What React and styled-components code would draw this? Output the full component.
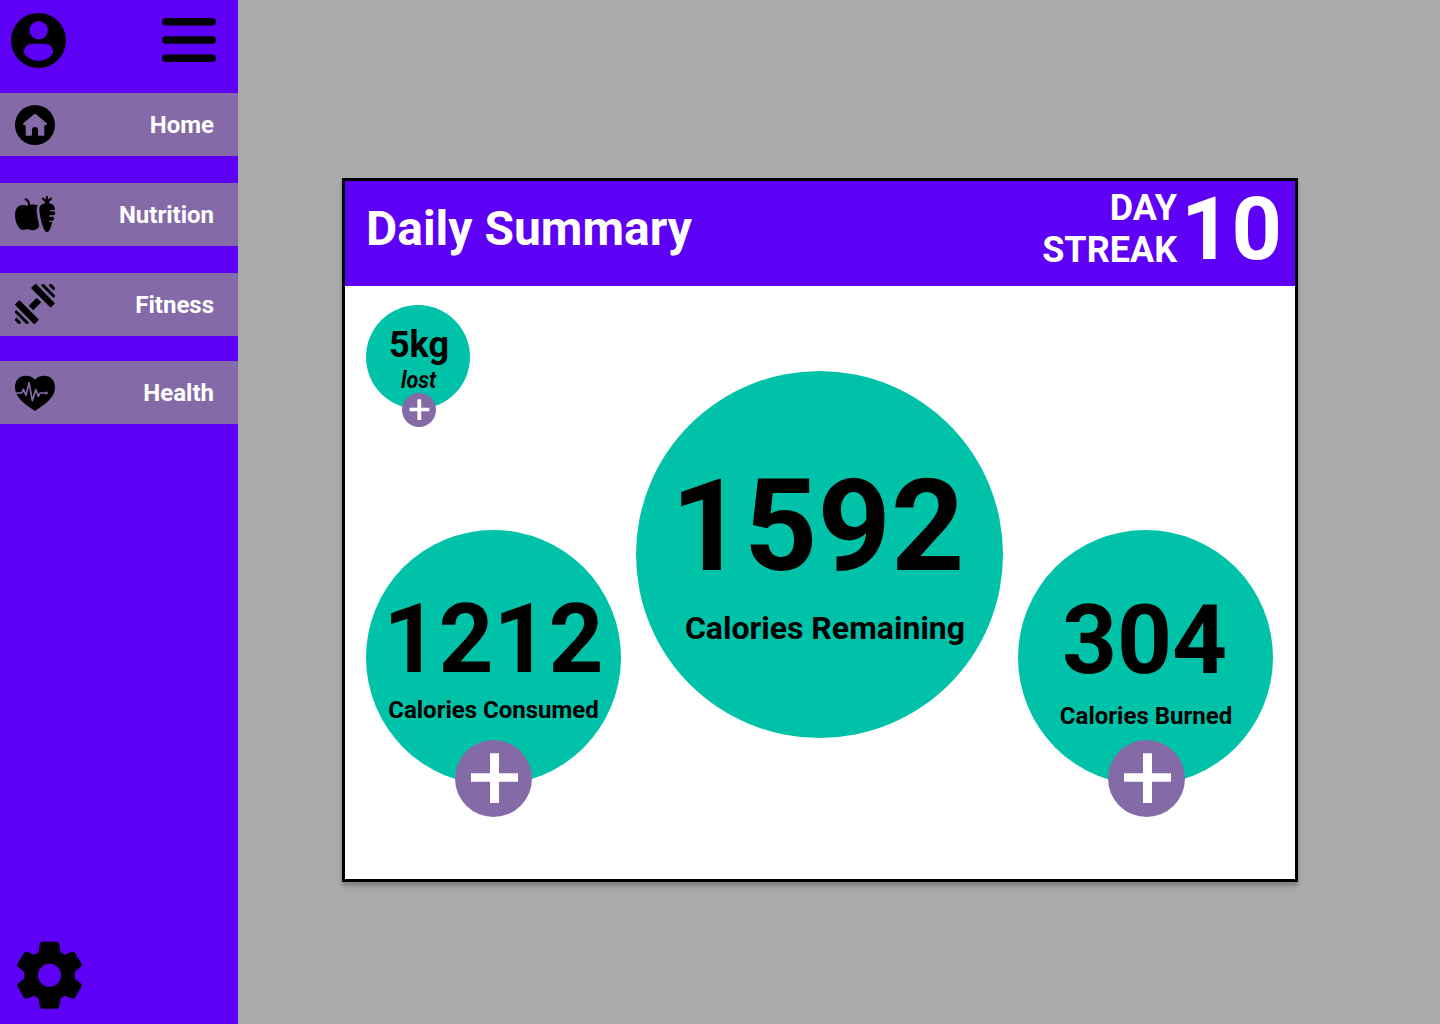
import React from "react";
import styled, { createGlobalStyle } from "styled-components";

const colors = {
  purple: "#5e00f5",
  mauve: "#846ba8",
  teal: "#00c2a9",
  grey: "#aaaaaa",
};

const GlobalStyle = createGlobalStyle`
  *, *::before, *::after { box-sizing: border-box; }
  body { margin: 0; font-family: Roboto, "Liberation Sans", sans-serif; font-weight: 700; }
`;

const Page = styled.div`
  display: flex;
  width: 1440px;
  height: 1024px;
  overflow: hidden;
  background: ${colors.grey};
`;

const Sidebar = styled.aside`
  display: flex;
  flex-direction: column;
  width: 238px;
  flex: none;
  background: ${colors.purple};
`;

const SidebarTop = styled.div`
  display: flex;
  justify-content: space-between;
  align-items: flex-start;
  height: 93px;
  padding: 13px 22px 0 11px;
`;

const IconButton = styled.button`
  display: block;
  padding: 0;
  border: 0;
  background: none;
  color: #000;
  cursor: pointer;
  svg { display: block; }
`;

const MenuButton = styled(IconButton)`
  margin-top: 5px;
`;

const Nav = styled.nav`
  display: flex;
  flex-direction: column;
`;

const NavItem = styled.a`
  display: flex;
  justify-content: space-between;
  align-items: flex-start;
  height: 63px;
  margin-bottom: ${(p) => p.$gap}px;
  padding: 0 24px 0 15px;
  background: ${colors.mauve};
  color: #fff;
  font-size: 24px;
  line-height: 65px;
`;

const NavIcon = styled.span`
  display: block;
  margin-top: ${(p) => p.$top}px;
  color: #000;
  svg { display: block; }
`;

const SidebarFooter = styled.div`
  margin-top: auto;
  padding: 0 0 15px 17px;
`;

const Main = styled.main`
  flex: 1;
  display: flex;
  justify-content: center;
  align-items: flex-start;
  padding: 178px 38px 0 0;
`;

const Card = styled.section`
  width: 956px;
  height: 704px;
  border: 3px solid #000;
  background: #fff;
  box-shadow: 0 4px 4px rgba(0, 0, 0, 0.25);
`;

const CardHeader = styled.header`
  display: flex;
  justify-content: space-between;
  align-items: flex-start;
  height: 105px;
  padding: 0 13px 0 21px;
  background: ${colors.purple};
  color: #fff;
`;

const Title = styled.h1`
  margin: 20px 0 0;
  font-size: 48px;
  line-height: 56px;
`;

const Streak = styled.div`
  display: flex;
  align-items: flex-start;
  gap: 4px;
`;

const StreakLabel = styled.div`
  margin-top: 6px;
  font-size: 36px;
  line-height: 42px;
  text-align: right;
`;

const StreakCount = styled.div`
  margin-top: -4px;
  font-size: 88px;
  line-height: 103px;
`;

const CardBody = styled.div`
  display: grid;
  grid-template-columns: 255px 367px 255px;
  column-gap: 15px;
  padding: 19px 22px 0 21px;
`;

const Column = styled.div`
  display: flex;
  flex-direction: column;
  padding-top: ${(p) => p.$top}px;
`;

const Bubble = styled.div`
  position: relative;
  display: flex;
  flex-direction: column;
  align-items: center;
  width: ${(p) => p.$size}px;
  height: ${(p) => p.$size}px;
  padding-top: ${(p) => p.$pad}px;
  margin-top: ${(p) => p.$gap || 0}px;
  border-radius: 50%;
  background: ${colors.teal};
  color: #000;
  white-space: nowrap;
`;

const Value = styled.div`
  font-size: ${(p) => p.$size}px;
  line-height: ${(p) => p.$line}px;
  margin-left: ${(p) => p.$nudge || 0}px;
`;

const Label = styled.div`
  margin-top: ${(p) => p.$gap}px;
  margin-left: ${(p) => p.$nudge || 0}px;
  font-size: ${(p) => p.$size || 24}px;
  line-height: ${(p) => (p.$size === 32 ? 38 : 28)}px;
`;

const Caption = styled.div`
  margin-left: 2px;
  font-size: 24px;
  font-style: italic;
  line-height: 28px;
  transform: scaleX(0.9);
`;

const AddButton = styled.button`
  position: absolute;
  left: ${(p) => p.$left}px;
  top: ${(p) => p.$top}px;
  width: ${(p) => p.$size}px;
  height: ${(p) => p.$size}px;
  padding: 0;
  border: 0;
  border-radius: 50%;
  background: ${colors.mauve};
  color: #fff;
  cursor: pointer;
  svg { display: block; }
`;

const PlusIcon = () => (
  <svg width="77" height="77" viewBox="0 0 77 77" fill="currentColor" aria-hidden="true">
    <path d="M35 13.300H44V33.200H63V41.700H44V63.100H35V41.700H16V33.200H35Z" />
  </svg>
);

const SmallPlusIcon = () => (
  <svg width="34" height="34" viewBox="0 0 34 34" fill="currentColor" aria-hidden="true">
    <path d="M15.400 6.300H19.200V14.700H27.300V18.200H19.200V27H15.400V18.200H7.600V14.700H15.400Z" />
  </svg>
);

const ProfileIcon = () => (
  <svg width="55" height="55" viewBox="0 0 165 165" aria-hidden="true">
    <path
      fillRule="evenodd"
      d="M82.500 0a82.500 82.500 0 1 0 0 165a82.500 82.500 0 1 0 0-165ZM83 24a27.500 27.500 0 1 1 0 55a27.500 27.500 0 1 1 0-55ZM65 92H100C117 92 126 103 126 119C117 135 100 143 83 143C65 143 48 135 39 119C39 103 48 92 65 92Z"
    />
  </svg>
);

const MenuIcon = () => (
  <svg width="54" height="44" viewBox="0 0 54 44" aria-hidden="true">
    <path d="M3.800 3.800H50.200M3.800 22H50.200M3.800 40.200H50.200" stroke="currentColor" strokeWidth="7.600" strokeLinecap="round" />
  </svg>
);

const HomeIcon = () => (
  <svg width="40" height="40" viewBox="0 0 120 120" aria-hidden="true">
    <circle cx="60" cy="60" r="60" />
    <path
      fill={colors.mauve}
      d="M55 29Q60 25 65 29L95 55Q98 60 92 61H88V89Q88 92 85 92H72Q69 92 69 89V75Q69 66 60 66Q51 66 51 75V89Q51 92 48 92H35Q32 92 32 89V61H28Q22 60 25 55Z"
    />
  </svg>
);

const NutritionIcon = () => (
  <svg width="40" height="40" viewBox="0 0 120 120" aria-hidden="true">
    <path d="M32 13C39 14 42 20 42 33" fill="none" stroke="currentColor" strokeWidth="6.500" strokeLinecap="round" />
    <path d="M39 33C44 29 56 27 68 31C65 38 64 46 66 56C68 70 71 82 73 94C68 102 61 106 54 106C47 106 43 103 38 103C33 103 29 106 22 105C9 102 0 79 0 60C0 41 10 30 22 30C29 30 34 31 39 33Z" />
    <path d="M96 28V6M94 25C93 18 90 14 84 11M98 25C99 18 102 14 108 11" fill="none" stroke="currentColor" strokeWidth="6.500" strokeLinecap="round" />
    <path d="M84 26C89 24 103 24 108 26C116 28 121 36 119 47C118 59 111 88 105 103C103 109 100 111 96 111C92 111 89 108 87 103C80 87 74 61 73 46C72 35 76 28 84 26Z" />
    <path d="M107 47H120M104 63H120M104 79H120" stroke={colors.mauve} strokeWidth="3.800" strokeLinecap="round" />
    <path d="M107 55H117M104 71H113" stroke="currentColor" strokeWidth="9" strokeLinecap="round" />
  </svg>
);

const FitnessIcon = () => (
  <svg width="40" height="40" viewBox="0 0 120 120" aria-hidden="true">
    <g stroke="currentColor" strokeWidth="6" strokeLinejoin="round">
      <path d="M52 12L62 3L116 58L107 67Z" />
      <path d="M3 62L13 52L68 107L58 117Z" />
      <path d="M65 44L76 55L55 76L44 65Z" strokeWidth="4" />
    </g>
    <g stroke="currentColor" strokeWidth="9" strokeLinecap="butt">
      <path d="M81 1L119 39M104 1L119 16M1 81L39 119M1 104L16 119" />
    </g>
  </svg>
);

const HealthIcon = () => (
  <svg width="40" height="40" viewBox="0 0 120 120" aria-hidden="true">
    <path d="M60 20C66 12 76 8 87 8C107 8 120 22 120 42C120 68 104 85 60 114C16 85 0 68 0 42C0 22 13 8 33 8C44 8 54 12 60 20Z" />
    <path d="M0 60H20L25 49L33 67L42 29L52 83L62 50L70 70L75 60H93" fill="none" stroke={colors.mauve} strokeWidth="5" strokeLinejoin="round" />
    <circle cx="94" cy="60" r="4.500" fill={colors.mauve} />
  </svg>
);

const SettingsIcon = () => (
  <svg width="66" height="68" viewBox="51.500 33.500 198 204" aria-hidden="true">
    <path
      fillRule="evenodd"
      d="M127 36H171Q177 36 178 42L182 67L195 75L216 66Q222 64 226 70L245 102Q248 107 243 111L225 126V147L243 161Q248 165 245 170L226 203Q222 209 216 206L195 198L182 206L178 231Q177 237 171 237H127Q121 237 120 231L116 206L103 198L82 206Q76 209 72 203L53 170Q50 165 54 161L73 147V126L54 111Q50 107 53 102L72 70Q76 64 82 66L103 75L116 67L120 42Q121 36 127 36ZM149 102A34.500 34.500 0 1 0 149 171A34.500 34.500 0 1 0 149 102Z"
    />
  </svg>
);

const navItems = [
  { label: "Home", icon: <HomeIcon />, top: 12, gap: 27 },
  { label: "Nutrition", icon: <NutritionIcon />, top: 12, gap: 27 },
  { label: "Fitness", icon: <FitnessIcon />, top: 11, gap: 25 },
  { label: "Health", icon: <HealthIcon />, top: 12, gap: 0 },
];

export default function App() {
  return (
    <Page>
      <GlobalStyle />
      <Sidebar>
        <SidebarTop>
          <IconButton aria-label="Profile"><ProfileIcon /></IconButton>
          <MenuButton aria-label="Menu"><MenuIcon /></MenuButton>
        </SidebarTop>
        <Nav>
          {navItems.map((item) => (
            <NavItem key={item.label} $gap={item.gap}>
              <NavIcon $top={item.top}>{item.icon}</NavIcon>
              {item.label}
            </NavItem>
          ))}
        </Nav>
        <SidebarFooter>
          <IconButton aria-label="Settings"><SettingsIcon /></IconButton>
        </SidebarFooter>
      </Sidebar>
      <Main>
        <Card>
          <CardHeader>
            <Title>Daily Summary</Title>
            <Streak>
              <StreakLabel>DAY<br />STREAK</StreakLabel>
              <StreakCount>10</StreakCount>
            </Streak>
          </CardHeader>
          <CardBody>
            <Column $top={0}>
              <Bubble $size={104} $pad={19}>
                <Value $size={36} $line={42} $nudge={2}>5kg</Value>
                <Caption>lost</Caption>
                <AddButton $size={34} $left={36} $top={88} aria-label="Log weight"><SmallPlusIcon /></AddButton>
              </Bubble>
              <Bubble $size={255} $pad={53} $gap={121}>
                <Value $size={96} $line={112}>1212</Value>
                <Label $gap={1}>Calories Consumed</Label>
                <AddButton $size={77} $left={89} $top={210} aria-label="Add calories consumed"><PlusIcon /></AddButton>
              </Bubble>
            </Column>
            <Column $top={66}>
              <Bubble $size={367} $pad={80}>
                <Value $size={128} $line={150} $nudge={-4}>1592</Value>
                <Label $gap={8} $size={32} $nudge={11}>Calories Remaining</Label>
              </Bubble>
            </Column>
            <Column $top={225}>
              <Bubble $size={255} $pad={54}>
                <Value $size={96} $line={112} $nudge={-2}>304</Value>
                <Label $gap={6} $nudge={1}>Calories Burned</Label>
                <AddButton $size={77} $left={90} $top={210} aria-label="Add calories burned"><PlusIcon /></AddButton>
              </Bubble>
            </Column>
          </CardBody>
        </Card>
      </Main>
    </Page>
  );
}
